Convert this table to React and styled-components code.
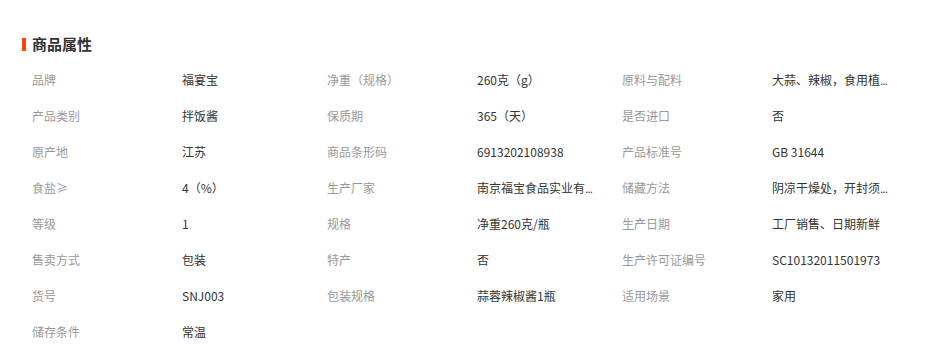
import React from "react";
import styled, { createGlobalStyle } from "styled-components";

const Global = createGlobalStyle`
  html, body { margin: 0; padding: 0; background: #fff; }
  body { font-family: "Noto Sans CJK SC", "Microsoft YaHei", sans-serif; }
`;

const Wrap = styled.section`
  padding: 35px 0 0 22px;
  width: 930px;
  box-sizing: border-box;
`;

const Title = styled.h2`
  margin: 0;
  display: flex;
  align-items: center;
  gap: 6px;
  height: 18px;
  font-size: 15px;
  font-weight: 700;
  color: #333;
  line-height: 18px;
`;

const Bar = styled.span`
  width: 4px;
  height: 13px;
  background: #ff4400;
`;

const Grid = styled.dl`
  margin: 8px 0 0 10px;
  display: grid;
  grid-template-columns: repeat(3, 150px 145px);
  grid-auto-rows: 36px;
  align-items: center;
  font-size: 12px;
`;

const Label = styled.dt`
  margin: 0;
  color: #999;
  white-space: nowrap;
`;

const Value = styled.dd`
  margin: 0;
  color: #333;
  white-space: nowrap;
`;

const Dots = styled.span`
  letter-spacing: -1px;
  font-family: "Liberation Sans", sans-serif;
`;

const items = [
  ["品牌", "福宴宝"],
  ["净重（规格）", "260克（g）"],
  ["原料与配料", "大蒜、辣椒，食用植", true],
  ["产品类别", "拌饭酱"],
  ["保质期", "365（天）"],
  ["是否进口", "否"],
  ["原产地", "江苏"],
  ["商品条形码", "6913202108938"],
  ["产品标准号", "GB 31644"],
  ["食盐≥", "4（%）"],
  ["生产厂家", "南京福宝食品实业有", true],
  ["储藏方法", "阴凉干燥处，开封须", true],
  ["等级", "1"],
  ["规格", "净重260克/瓶"],
  ["生产日期", "工厂销售、日期新鲜"],
  ["售卖方式", "包装"],
  ["特产", "否"],
  ["生产许可证编号", "SC10132011501973"],
  ["货号", "SNJ003"],
  ["包装规格", "蒜蓉辣椒酱1瓶"],
  ["适用场景", "家用"],
  ["储存条件", "常温"],
];

export default function App() {
  return (
    <>
      <Global />
      <Wrap>
        <Title>
          <Bar />
          商品属性
        </Title>
        <Grid>
          {items.map(([k, v, cut]) => (
            <React.Fragment key={k}>
              <Label>{k}</Label>
              <Value>
                {v}
                {cut && <Dots>...</Dots>}
              </Value>
            </React.Fragment>
          ))}
        </Grid>
      </Wrap>
    </>
  );
}
